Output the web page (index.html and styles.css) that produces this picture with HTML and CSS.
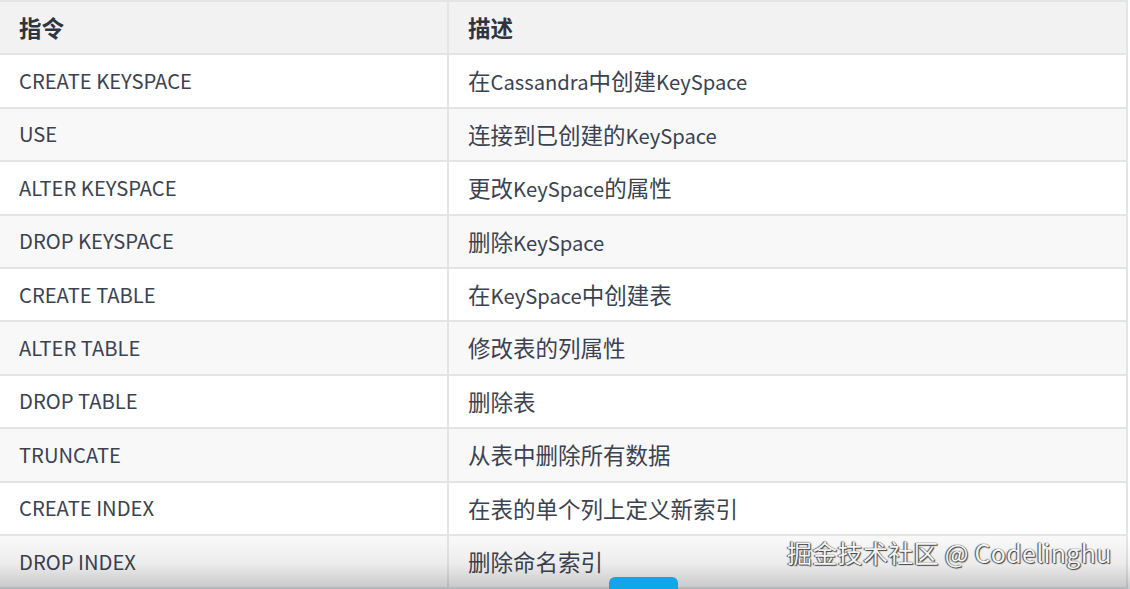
FILE: index.html
```html
<!DOCTYPE html>
<html lang="zh">
<head>
<meta charset="utf-8">
<link rel="stylesheet" href="styles.css">
</head>
<body>
<div class="frame">
  <table class="cmd-table">
    <thead>
      <tr><th class="c1"><span class="zh">指令</span></th><th><span class="zh">描述</span></th></tr>
    </thead>
    <tbody>
      <tr><td class="c1">CREATE KEYSPACE</td><td><span class="zh">在</span>Cassandra<span class="zh">中创建</span>KeySpace</td></tr>
      <tr><td class="c1">USE</td><td><span class="zh">连接到已创建的</span>KeySpace</td></tr>
      <tr><td class="c1">ALTER KEYSPACE</td><td><span class="zh">更改</span>KeySpace<span class="zh">的属性</span></td></tr>
      <tr><td class="c1">DROP KEYSPACE</td><td><span class="zh">删除</span>KeySpace</td></tr>
      <tr><td class="c1">CREATE TABLE</td><td><span class="zh">在</span>KeySpace<span class="zh">中创建表</span></td></tr>
      <tr><td class="c1">ALTER TABLE</td><td><span class="zh">修改表的列属性</span></td></tr>
      <tr><td class="c1">DROP TABLE</td><td><span class="zh">删除表</span></td></tr>
      <tr><td class="c1">TRUNCATE</td><td><span class="zh">从表中删除所有数据</span></td></tr>
      <tr><td class="c1">CREATE INDEX</td><td><span class="zh">在表的单个列上定义新索引</span></td></tr>
      <tr><td class="c1">DROP INDEX</td><td><span class="zh">删除命名索引</span></td></tr>
    </tbody>
  </table>
  <div class="shade"></div>
  <div class="progress"></div>
  <div class="watermark">掘金技术社区 @ Codelinghu</div>
</div>
</body>
</html>
```
FILE: styles.css
```css
html, body {
  margin: 0;
  padding: 0;
  background: #ffffff;
}
.frame {
  position: relative;
  width: 1130px;
  height: 589px;
  overflow: hidden;
  font-family: "Noto Sans CJK SC", "Noto Sans", sans-serif;
}
.cmd-table {
  border-collapse: collapse;
  width: 1128px;
  color: #3b4250;
  font-size: 20.2px;
}
.cmd-table th,
.cmd-table td {
  border: 2px solid #e3e4e6;
  height: 51.4px;
  padding: 0 19px;
  text-align: left;
  vertical-align: middle;
  line-height: 1;
}
.cmd-table th {
  background: #f2f2f3;
  font-weight: 700;
  color: #2e3440;
}
.zh {
  font-size: 22.5px;
}
.cmd-table .c1 {
  width: 409px;
}
.cmd-table th:first-child,
.cmd-table td:first-child {
  border-left: none;
}
.cmd-table tbody tr:nth-child(even) td {
  background: #f8f8f9;
}
.shade {
  position: absolute;
  left: 0;
  right: 0;
  bottom: 0;
  height: 50px;
  background: linear-gradient(to bottom, rgba(0,0,0,0) 0%, rgba(0,0,0,0.05) 50%, rgba(0,0,0,0.2) 100%);
}
.progress {
  position: absolute;
  left: 609px;
  bottom: 0;
  width: 69px;
  height: 12px;
  background: #0ea7e8;
  border-radius: 6px 6px 0 0;
}
.watermark {
  position: absolute;
  left: 787px;
  top: 534px;
  font-size: 25px;
  color: #f4f4f4;
  letter-spacing: 0.3px;
  text-shadow: 0 0 1px #333, 1px 1px 1px #444, -1px 0 1px #555;
}
```
